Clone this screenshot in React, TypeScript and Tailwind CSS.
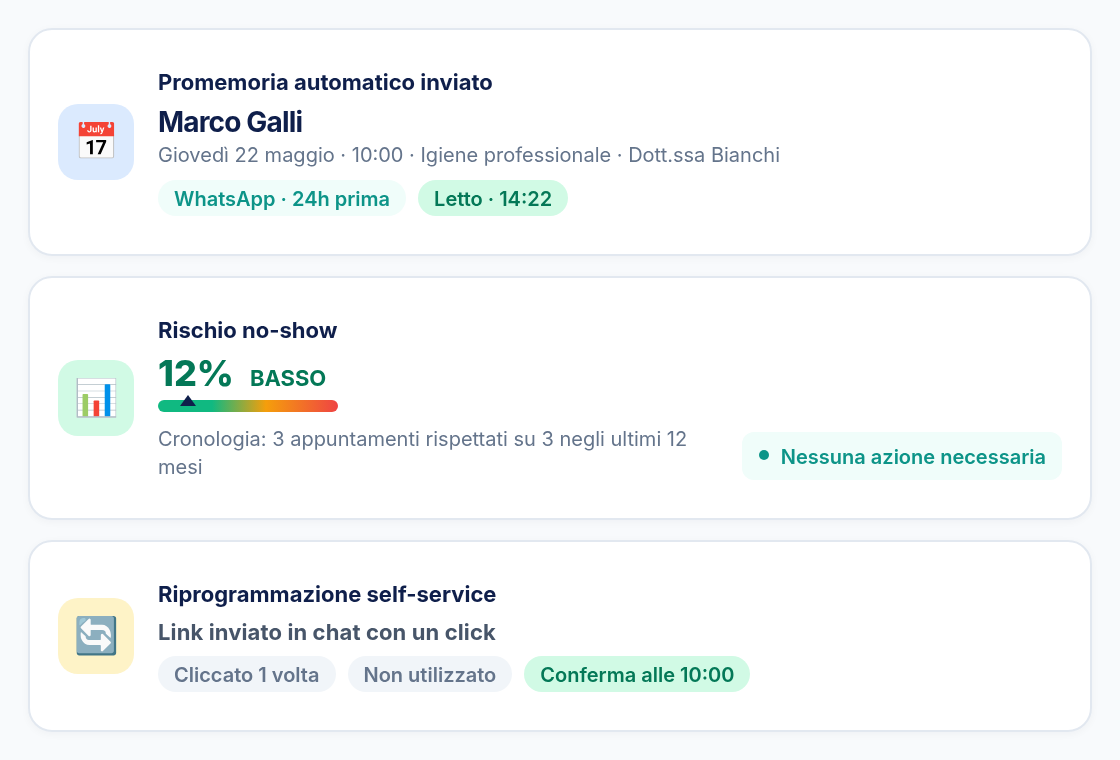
const pill = "rounded-full px-4 h-9 flex items-center pt-px text-[20px] font-semibold";
const card = "bg-white border-2 border-[#e2e8f0] rounded-3xl shadow-[0_2px_8px_rgba(15,23,42,0.04)] px-7 flex items-center gap-6 will-change-transform";

export default function App() {
  return (
    <div className="min-h-[760px] bg-[#f8fafc] p-7 flex flex-col gap-5 font-['Inter',sans-serif]">
      <div className={`${card} h-[228px]`}>
        <div className="w-[76px] h-[76px] pl-px pb-0.5 rounded-[20px] bg-[#dbeafe] flex items-center justify-center text-[36px] shrink-0">📅</div>
        <div className="flex-1">
          <div className="text-[22px] leading-7 font-bold text-[#0f1f4b]">Promemoria automatico inviato</div>
          <div className="text-[28px] leading-8 font-bold tracking-[-0.03em] text-[#0f1f4b] mt-2.5">Marco Galli</div>
          <div className="text-[20px] leading-7 text-[#64748b] mt-[3px]">Giovedì 22 maggio · 10:00 · Igiene professionale · Dott.ssa Bianchi</div>
          <div className="flex gap-3 mt-[11px]">
            <span className={`${pill} bg-[#f0fdfa] text-[#0d9488]`}>WhatsApp · 24h prima</span>
            <span className={`${pill} bg-[#d1fae5] text-[#047857]`}>Letto · 14:22</span>
          </div>
        </div>
      </div>

      <div className={`${card} h-[244px]`}>
        <div className="w-[76px] h-[76px] pl-px pb-0.5 rounded-[20px] bg-[#d1fae5] flex items-center justify-center text-[36px] shrink-0">📊</div>
        <div className="flex-1 min-w-0">
          <div className="text-[22px] leading-7 font-bold text-[#0f1f4b]">Rischio no-show</div>
          <div className="flex items-baseline gap-4 mt-[7px] text-[#047857]">
            <span className="text-[36px] leading-[44px] font-extrabold">12%</span>
            <span className="text-[22px] font-bold">BASSO</span>
          </div>
          <div className="relative w-[180px] h-3 mt-[5px] rounded-full bg-[linear-gradient(90deg,#10b981_0%,#10b981_30%,#f59e0b_60%,#ef4444_100%)]">
            <div className="absolute left-[22px] -top-[5px] w-0 h-0 border-x-8 border-b-[11px] border-x-transparent border-b-[#0f1f4b]" />
          </div>
          <div className="flex items-end justify-between gap-10 mt-[13px]">
            <div className="text-[20px] leading-7 text-[#64748b] w-[560px]">Cronologia: 3 appuntamenti rispettati su 3 negli ultimi 12 mesi</div>
            <div className="bg-[#f0fdfa] text-[#0d9488] rounded-xl h-12 w-80 px-4 mb-px flex items-center gap-3 text-[20px] font-semibold whitespace-nowrap shrink-0">
              <span className="w-2.5 h-2.5 rounded-full bg-[#0d9488] ml-px mb-0.5" />
              <span className="pt-0.5">Nessuna azione necessaria</span>
            </div>
          </div>
        </div>
      </div>

      <div className={`${card} h-[192px]`}>
        <div className="w-[76px] h-[76px] pl-px pb-0.5 rounded-[20px] bg-[#fef3c7] flex items-center justify-center text-[36px] shrink-0">🔄</div>
        <div className="flex-1">
          <div className="text-[22px] leading-7 font-bold text-[#0f1f4b]">Riprogrammazione self-service</div>
          <div className="text-[22px] leading-7 font-bold tracking-[0.12px] text-[#475569] mt-2.5">Link inviato in chat con un click</div>
          <div className="flex gap-3 mt-2.5">
            <span className={`${pill} pr-[17px] bg-[#f1f5f9] text-[#64748b]`}>Cliccato 1 volta</span>
            <span className={`${pill} pl-[15px] bg-[#f1f5f9] text-[#64748b]`}>Non utilizzato</span>
            <span className={`${pill} bg-[#d1fae5] text-[#047857]`}>Conferma alle 10:00</span>
          </div>
        </div>
      </div>
    </div>
  );
}
